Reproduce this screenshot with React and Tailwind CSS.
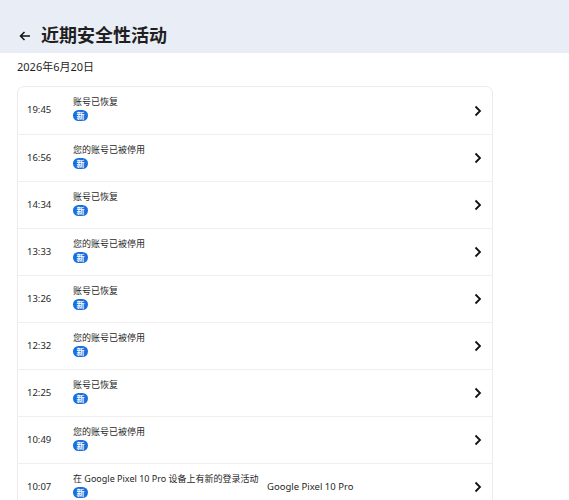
import React from "react";

const rows = [
  { time: "19:45", title: "账号已恢复" },
  { time: "16:56", title: "您的账号已被停用" },
  { time: "14:34", title: "账号已恢复" },
  { time: "13:33", title: "您的账号已被停用" },
  { time: "13:26", title: "账号已恢复" },
  { time: "12:32", title: "您的账号已被停用" },
  { time: "12:25", title: "账号已恢复" },
  { time: "10:49", title: "您的账号已被停用" },
  { time: "10:07", title: "在 Google Pixel 10 Pro 设备上有新的登录活动", device: "Google Pixel 10 Pro" },
];

const Chevron = () => (
  <svg width="10" height="12" viewBox="0 0 10 12" fill="none">
    <path d="M3.5 1.5 L8 6 L3.5 10.5" stroke="#111" strokeWidth="1.8" />
  </svg>
);

export default function App() {
  return (
    <div className="min-h-[500px] bg-white text-[#1f1f1f]" style={{ fontFamily: '"Noto Sans", "Noto Sans CJK SC", sans-serif' }}>
      <header className="h-[53px] bg-[#e9edf6] flex items-end pb-[6px] pl-[18px]">
        <svg width="14" height="14" viewBox="0 0 14 14" fill="none" className="mb-[4px]">
          <path d="M12 7 H2.5 M6.5 3 L2.5 7 L6.5 11" stroke="#111" strokeWidth="1.5" />
        </svg>
        <h1 className="ml-[9px] text-[18px] font-bold leading-[24px]">近期安全性活动</h1>
      </header>
      <div className="px-[17px]">
        <div className="pt-[6px] pb-[11px] text-[11px] leading-[16px]">2026年6月20日</div>
        <div className="w-[476px] rounded-[7px] border border-[#ececec] overflow-hidden">
          {rows.map((r, i) => (
            <div key={i} className={`h-[47px] flex items-center ${i ? "border-t border-[#efefef]" : ""}`}>
              <div className="w-[55px] pl-[9px] text-[9.5px]">{r.time}</div>
              <div className="w-[194px] flex flex-col items-start pb-[4px]">
                <div className="text-[9px] leading-[12px] whitespace-nowrap">{r.title}</div>
                <span className="mt-[2px] h-[11px] w-[15px] rounded-full bg-[#1a6fe0] text-white text-[8px] leading-[11px] text-center font-bold">新</span>
              </div>
              <div className="flex-1 text-[9.5px]">{r.device || ""}</div>
              <div className="pr-[10px]"><Chevron /></div>
            </div>
          ))}
        </div>
      </div>
    </div>
  );
}
